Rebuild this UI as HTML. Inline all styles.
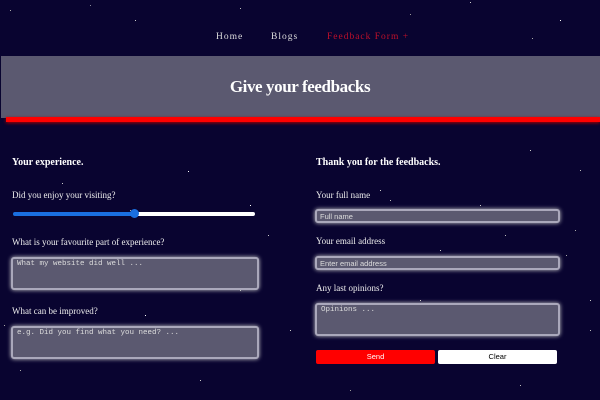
<!DOCTYPE html>
<html><head><style>
*{margin:0;padding:0;box-sizing:border-box}
body{width:600px;height:400px;background:#090430;position:relative;overflow:hidden;font-family:"Liberation Serif",serif;color:#fff}
.a{position:absolute}
.stars{position:absolute;left:0;top:0;width:1px;height:1px;background:transparent;box-shadow:
10px 10px #aaa,135px 20px #ccc,90px 5px #889,240px 8px #bbb,410px 14px #999,470px 2px #ccc,532px 38px #aaa,560px 20px #fff,80px 75px #99a,194px 87px #ccc,300px 120px #aaa,460px 100px #bbb,530px 150px #ccc,188px 171px #fff,62px 183px #ccc,130px 210px #aaa,250px 205px #fff,268px 235px #ccc,240px 290px #bbb,145px 315px #fff,290px 330px #ccc,4px 325px #aaa,70px 285px #999,390px 200px #bbb,480px 205px #ccc,555px 220px #fff,575px 230px #aaa,440px 250px #ccc,505px 235px #bbb,566px 255px #aaa,420px 300px #ccc,480px 330px #999,590px 330px #bbb,360px 160px #aaa,380px 190px #ccc,580px 170px #bbb,20px 370px #aaa,200px 380px #ccc,350px 390px #999,520px 385px #bbb,590px 300px #ccc;}
.banner{left:1px;top:56px;width:599px;height:62px;background:#5b5970}
.red{left:6px;top:117px;width:594px;height:5px;background:#f00;box-shadow:0 1px 3px #a00}
.nav{top:32px;font-size:9.5px;letter-spacing:1px;color:#ddd}
h1{position:absolute;left:0;width:600px;top:77px;text-align:center;font-size:17px;letter-spacing:-0.4px;font-weight:bold}
h2{position:absolute;font-size:10px;font-weight:bold}
.l{position:absolute;font-size:9px;color:#eee}
.box{position:absolute;background:#5b5970;border:2px solid #aaa8bb;border-radius:3px;box-shadow:0 0 4px #ccc;font-family:"Liberation Mono",monospace;font-size:7.5px;color:#ddd;padding:1px 4px}
.inp{font-family:"Liberation Sans",sans-serif;font-size:7.5px;padding:1px 3px}
.btn{position:absolute;font-family:"Liberation Sans",sans-serif;font-size:7.5px;text-align:center;line-height:14px;border-radius:2px}
</style></head><body>
<div class="stars"></div>
<div class="a nav" style="left:216px">Home</div>
<div class="a nav" style="left:271px">Blogs</div>
<div class="a nav" style="left:327px;color:#c0102a">Feedback Form +</div>
<div class="a banner"></div>
<div class="a red"></div>
<h1>Give your feedbacks</h1>
<h2 style="left:12px;top:157px">Your experience.</h2>
<div class="l" style="left:12px;top:190px">Did you enjoy your visiting?</div>
<div class="a" style="left:13px;top:212px;width:121px;height:4px;background:#1a6fe0;border-radius:2px"></div>
<div class="a" style="left:134px;top:212px;width:121px;height:4px;background:#fff;border-radius:2px"></div>
<div class="a" style="left:130px;top:209px;width:9px;height:9px;background:#1a6fe0;border-radius:50%"></div>
<div class="l" style="left:12px;top:237px">What is your favourite part of experience?</div>
<div class="box" style="left:11px;top:257px;width:248px;height:33px">What my website did well ...</div>
<div class="l" style="left:12px;top:306px">What can be improved?</div>
<div class="box" style="left:11px;top:326px;width:248px;height:33px">e.g. Did you find what you need? ...</div>
<h2 style="left:316px;top:157px">Thank you for the feedbacks.</h2>
<div class="l" style="left:316px;top:190px">Your full name</div>
<div class="box inp" style="left:315px;top:209px;width:245px;height:14px">Full name</div>
<div class="l" style="left:316px;top:236px">Your email address</div>
<div class="box inp" style="left:315px;top:256px;width:245px;height:14px">Enter email address</div>
<div class="l" style="left:316px;top:283px">Any last opinions?</div>
<div class="box" style="left:315px;top:303px;width:245px;height:33px">Opinions ...</div>
<div class="btn" style="left:316px;top:350px;width:119px;height:14px;background:#f00">Send</div>
<div class="btn" style="left:438px;top:350px;width:119px;height:14px;background:#fff;color:#000">Clear</div>
</body></html>
